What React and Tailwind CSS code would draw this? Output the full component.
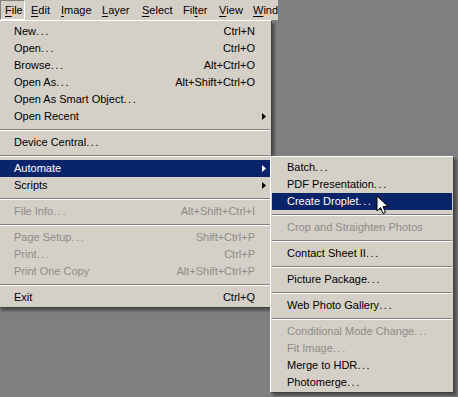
import React from 'react';

const font = { fontFamily: '"Liberation Sans", Arial, sans-serif' };

const BAR = [
  { pre: '', u: 'F', post: 'ile', w: 'w-[25px] pl-[4px]', pressed: true },
  { pre: '', u: 'E', post: 'dit', w: 'w-[30px] pl-[6px]' },
  { pre: '', u: 'I', post: 'mage', w: 'w-[41px] pl-[6px]' },
  { pre: '', u: 'L', post: 'ayer', w: 'w-[40px] pl-[6px]' },
  { pre: '', u: 'S', post: 'elect', w: 'w-[41px] pl-[6px]' },
  { pre: 'Fil', u: 't', post: 'er', w: 'w-[36px] pl-[6px]' },
  { pre: '', u: 'V', post: 'iew', w: 'w-[34px] pl-[6px]' },
  { pre: '', u: 'W', post: 'indow', w: 'w-[40px] pl-[6px]' },
];

const MAIN = [
  { label: 'New...', sc: 'Ctrl+N' },
  { label: 'Open...', sc: 'Ctrl+O' },
  { label: 'Browse...', sc: 'Alt+Ctrl+O' },
  { label: 'Open As...', sc: 'Alt+Shift+Ctrl+O' },
  { label: 'Open As Smart Object...' },
  { label: 'Open Recent', arrow: true },
  'sep',
  { label: 'Device Central...' },
  'sep',
  { label: 'Automate', arrow: true, active: true },
  { label: 'Scripts', arrow: true },
  'sep',
  { label: 'File Info...', sc: 'Alt+Shift+Ctrl+I', disabled: true },
  'sep',
  { label: 'Page Setup...', sc: 'Shift+Ctrl+P', disabled: true },
  { label: 'Print...', sc: 'Ctrl+P', disabled: true },
  { label: 'Print One Copy', sc: 'Alt+Shift+Ctrl+P', disabled: true },
  'sep',
  { label: 'Exit', sc: 'Ctrl+Q' },
];

const SUB = [
  { label: 'Batch...' },
  { label: 'PDF Presentation...' },
  { label: 'Create Droplet...', active: true },
  'sep',
  { label: 'Crop and Straighten Photos', disabled: true },
  'sep',
  { label: 'Contact Sheet II...' },
  'sep',
  { label: 'Picture Package...' },
  'sep',
  { label: 'Web Photo Gallery...' },
  'sep',
  { label: 'Conditional Mode Change...', disabled: true },
  { label: 'Fit Image...', disabled: true },
  { label: 'Merge to HDR...' },
  { label: 'Photomerge...' },
];

// Tahoma-style ellipsis: the dots sit a bit further apart
const Label = ({ text }) => {
  if (text.endsWith('...')) {
    return (
      <span>
        {text.slice(0, -3)}
        <span className="tracking-[1.6px]">...</span>
      </span>
    );
  }
  return <span>{text}</span>;
};

const Sep = () => (
  <div className="h-[9px] flex flex-col justify-center">
    <div className="h-px bg-[#808080]" />
    <div className="h-px bg-white" />
  </div>
);

const Item = ({ item, pl, pr }) => {
  const color = item.active ? 'bg-[#0a246a] text-white' : item.disabled ? 'text-[#8e8c87]' : 'text-black';
  return (
    <div className={`relative flex items-center h-[17px] ${pl} ${pr} ${color}`}>
      <div className="flex-1 whitespace-nowrap">
        <Label text={item.label} />
      </div>
      {item.sc && <div className="whitespace-nowrap">{item.sc}</div>}
      {item.arrow && (
        <svg className="absolute right-[4px] top-[5px]" width="4" height="7" viewBox="0 0 4 7">
          <path d="M0 0 L4 3.5 L0 7 Z" fill={item.active ? '#ffffff' : '#000000'} />
        </svg>
      )}
    </div>
  );
};

const Menu = ({ items, pl, pr }) =>
  items.map((it, i) => (it === 'sep' ? <Sep key={i} /> : <Item key={i} item={it} pl={pl} pr={pr} />));

export default function App() {
  return (
    <div className="relative w-[458px] h-[397px] overflow-hidden bg-[#7f7f7f] text-[11px]" style={font}>
      {/* menu bar */}
      <div className="flex h-[20px] w-[278px] bg-[#d4d0c8] overflow-hidden">
        {BAR.map((b, i) => (
          <div
            key={i}
            className={`shrink-0 flex items-center h-full whitespace-nowrap ${b.w} ${
              b.pressed ? 'border-t border-l border-[#808080] border-r-white border-b-white border-r border-b' : ''
            }`}
          >
            {b.pre}
            <span className="underline underline-offset-[2px]">{b.u}</span>
            {b.post}
          </div>
        ))}
      </div>

      {/* File menu */}
      <div className="absolute left-[-2px] top-[20px] w-[274px] bg-[#d4d0c8] border border-t-white border-l-white border-r-[#404040] border-b-[#404040] px-[1px] pt-[2px] pb-[1px] shadow-[3px_3px_2px_rgba(0,0,0,0.35)]">
        <Menu items={MAIN} pl="pl-[14px]" pr="pr-[15px]" />
      </div>

      {/* Automate submenu */}
      <div className="absolute left-[270px] top-[156px] w-[184px] bg-[#d4d0c8] border border-t-white border-l-white border-r-[#404040] border-b-[#404040] px-[1px] pt-[2px] pb-[1px] shadow-[3px_3px_2px_rgba(0,0,0,0.35)]">
        <Menu items={SUB} pl="pl-[15px]" pr="pr-[15px]" />
      </div>

      {/* mouse pointer */}
      <svg className="absolute left-[376px] top-[195px]" width="13" height="20" viewBox="0 0 13 20">
        <path
          d="M1 1 L1 16 L4.5 12.5 L7 18.5 L9.5 17.5 L7 11.5 L12 11.5 Z"
          fill="#ffffff"
          stroke="#000000"
          strokeWidth="1"
          strokeLinejoin="miter"
        />
      </svg>
    </div>
  );
}
